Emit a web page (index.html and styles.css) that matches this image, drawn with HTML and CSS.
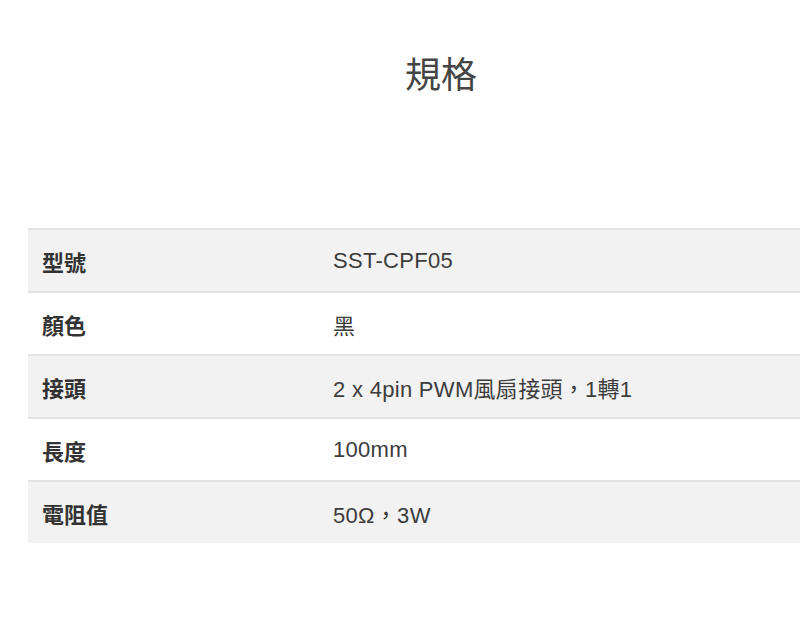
FILE: index.html
```html
<!DOCTYPE html>
<html lang="zh-Hant">
<head>
<meta charset="utf-8">
<link rel="stylesheet" href="styles.css">
</head>
<body>
<div class="page">
  <h2 class="title">規格</h2>
  <div class="spec">
    <div class="row alt"><div class="label">型號</div><div class="value">SST-CPF05</div></div>
    <div class="row"><div class="label">顏色</div><div class="value">黑</div></div>
    <div class="row alt"><div class="label">接頭</div><div class="value">2 x 4pin PWM風扇接頭，1轉1</div></div>
    <div class="row"><div class="label">長度</div><div class="value">100mm</div></div>
    <div class="row alt"><div class="label">電阻值</div><div class="value">50Ω，3W</div></div>
  </div>
</div>
</body>
</html>
```
FILE: styles.css
```css
html, body {
  margin: 0;
  padding: 0;
  background: #fff;
}
body {
  font-family: "Liberation Sans", "Noto Sans CJK TC", sans-serif;
  color: #333;
}
.page {
  margin-left: 28px;
}
.title {
  margin: 0;
  padding: 52px 0 0 54px;
  height: 228px;
  box-sizing: border-box;
  text-align: center;
  font-size: 36px;
  font-weight: normal;
  line-height: 48px;
  color: #444;
}
.row {
  display: flex;
  align-items: center;
  height: 63px;
  box-sizing: border-box;
  border-top: 2px solid #e2e2e2;
  font-size: 22px;
}
.row.alt {
  background: #f2f2f2;
}
.label {
  width: 291px;
  flex: none;
  padding-left: 14px;
  font-weight: bold;
  color: #333;
}
.value {
  color: #3c3c3c;
  letter-spacing: 0.3px;
}
```
